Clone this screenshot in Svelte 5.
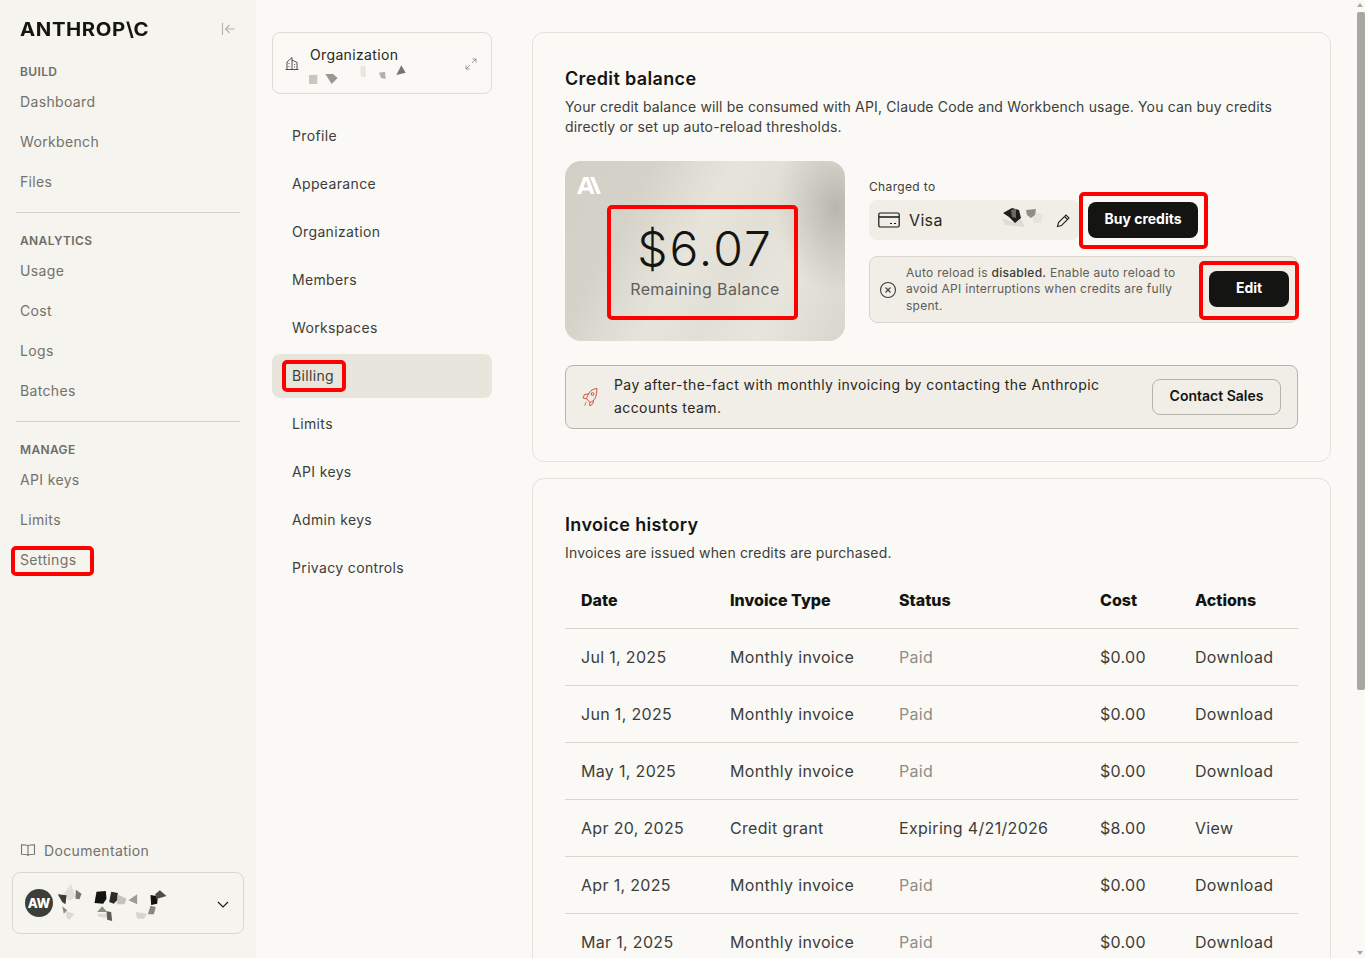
<script>
  const groups = [
    { label: 'BUILD', items: ['Dashboard', 'Workbench', 'Files'] },
    { label: 'ANALYTICS', items: ['Usage', 'Cost', 'Logs', 'Batches'] },
    { label: 'MANAGE', items: ['API keys', 'Limits', 'Settings'] }
  ];
  const settings = ['Profile', 'Appearance', 'Organization', 'Members', 'Workspaces', 'Billing', 'Limits', 'API keys', 'Admin keys', 'Privacy controls'];
  const invoices = [
    ['Jul 1, 2025', 'Monthly invoice', 'Paid', '$0.00', 'Download'],
    ['Jun 1, 2025', 'Monthly invoice', 'Paid', '$0.00', 'Download'],
    ['May 1, 2025', 'Monthly invoice', 'Paid', '$0.00', 'Download'],
    ['Apr 20, 2025', 'Credit grant', 'Expiring 4/21/2026', '$8.00', 'View'],
    ['Apr 1, 2025', 'Monthly invoice', 'Paid', '$0.00', 'Download'],
    ['Mar 1, 2025', 'Monthly invoice', 'Paid', '$0.00', 'Download']
  ];
</script>

<div class="app">
  <aside class="side">
    <div class="brand">
      <span class="logo">ANTHROP\C</span>
      <svg class="collapse" width="16" height="16" viewBox="0 0 16 16" fill="none" stroke="#b4b2aa" stroke-width="1.1"><path d="M2.500 2v12M14.500 8H5.500M9.500 4 5.500 8l4 4"/></svg>
    </div>
    {#each groups as g, i}
      {#if i > 0}<div class="rule"></div>{/if}
      <div class="grp">{g.label}</div>
      {#each g.items as it}
        <div class="nav"><span class:mark={it === 'Settings'} class:mark-s={it === 'Settings'}>{it}</span></div>
      {/each}
    {/each}
    <div class="push"></div>
    <div class="doc">
      <svg width="16" height="16" viewBox="0 0 16 16" fill="none" stroke="#77756e" stroke-width="1.1"><path d="M8 4C7 3 5 2.800 1.500 2.800v9.400C5 12.200 7 12.400 8 13.400c1-1 3-1.200 6.500-1.200V2.800C11 2.800 9 3 8 4Zm0 0v9.400"/></svg>
      <span>Documentation</span>
    </div>
    <div class="user">
      <div class="avatar">AW</div>
      <svg class="blur-user" width="112" height="40" viewBox="170 155 335 120">
        <polygon points="190,190 212,160 225,200 205,212" fill="#e2e0da"/>
        <polygon points="226,178 243,190 237,207 225,205" fill="#77756f"/>
        <polygon points="172,192 198,195 195,222 185,215" fill="#3c3b38"/>
        <polygon points="185,228 200,240 190,250" fill="#8d8b85"/>
        <polygon points="196,242 222,250 208,268 198,262" fill="#dddbd4"/>
        <polygon points="288,184 316,182 318,205 308,220 282,218" fill="#141413"/>
        <polygon points="332,184 352,188 354,205 340,220 326,215" fill="#2c2b29"/>
        <polygon points="350,192 378,205 372,222 350,222" fill="#c4c2bb"/>
        <polygon points="410,192 410,222 384,210" fill="#9c9a93"/>
        <polygon points="305,228 320,245 290,245" fill="#8f8d87"/>
        <polygon points="290,250 318,250 318,262 295,260" fill="#dad8d1"/>
        <polygon points="318,243 332,245 335,272 320,268" fill="#5e5d59"/>
        <polygon points="450,194 472,198 470,220 452,224" fill="#111110"/>
        <polygon points="478,180 498,197 468,206 464,192" fill="#4d4c48"/>
        <polygon points="450,226 466,230 460,252 442,252" fill="#898780"/>
        <polygon points="405,245 440,250 430,265 410,265" fill="#d6d4cd"/>
      </svg>
      <svg class="chev" width="14" height="14" viewBox="0 0 14 14" fill="none" stroke="#141413" stroke-width="1.1"><path d="m2 5 5 5 5-5"/></svg>
    </div>
  </aside>

  <nav class="sub">
    <div class="org">
      <svg class="org-ic" width="14" height="14" viewBox="0 0 14 14" fill="none" stroke="#3d3d3a" stroke-width=".9"><path d="M.5 13.500h13M2 13.500V6l5-4.500v12M7 4l5 2.500v7M4 7v1M4 10v1M9.500 8v1M9.500 10.500v1"/></svg>
      <div class="org-txt">
        <div>Organization</div>
        <svg width="100" height="20" viewBox="128 110 300 60">
          <polygon points="128,143 153,142 153,170 128,170" fill="#c8c6bf"/>
          <polygon points="177,140 200,140 214,152 196,170" fill="#9a9891"/>
          <polygon points="282,115 298,115 298,150 284,148" fill="#e7e5de"/>
          <polygon points="338,136 356,133 358,155 344,152" fill="#b3b1aa"/>
          <polygon points="405,114 418,136 390,143" fill="#777570"/>
        </svg>
      </div>
      <svg class="org-exp" width="12" height="12" viewBox="0 0 12 12" fill="none" stroke="#8f8d86" stroke-width=".9"><path d="M7.500 1H11v3.500M11 1 7 5M4.500 11H1V7.500M1 11l4-4"/></svg>
    </div>
    <div class="sub-list">
      {#each settings as s}
        <div class="sub-item" class:on={s === 'Billing'}><span class:mark={s === 'Billing'} class:mark-b={s === 'Billing'}>{s}</span></div>
      {/each}
    </div>
  </nav>

  <main class="main">
    <section class="card">
      <h2>Credit balance</h2>
      <p class="lede">Your credit balance will be consumed with API, Claude Code and Workbench usage. You can buy credits directly or set up auto-reload thresholds.</p>
      <div class="bal-row">
        <div class="gift">
          <svg class="a-mark" width="24" height="17" viewBox="0 0 24 17" fill="#fff"><path fill-rule="evenodd" d="M6.500 0h5l6 17h-4l-1.200-3.500H5.500L4 17H0ZM9 3.500l-2.500 7h4.800ZM13 0h4l7 17h-4Z"/></svg>
          <div class="amount mark mark-a">
            <div class="num">$6.07</div>
            <div class="rem">Remaining Balance</div>
          </div>
        </div>
        <div class="bal-right">
          <div class="charged">Charged to</div>
          <div class="pay-row">
            <div class="visa">
              <svg width="22" height="16" viewBox="0 0 22 16" fill="none" stroke="#141413" stroke-width="1.200"><rect x=".8" y="1" width="20.400" height="14" rx="1.500"/><path d="M1 5h20" stroke-width="1.500"/><path d="M12 11.500h2M16 11.500h2"/></svg>
              <span class="visa-t">Visa</span>
              <svg class="visa-blur" width="42" height="23" viewBox="3 5 42 23">
                <polygon points="3,15 16,20 22,16 26,24 6,22" fill="#dedcd4"/>
                <polygon points="4,10 13,5 20,7 22,15 16,20 10,14" fill="#1f1f1d"/>
                <polygon points="12,7 17,6 17,15 13,14" fill="#6a6965"/>
                <polygon points="34,8 44,12 42,20 34,20" fill="#e6e4dc"/>
                <polygon points="27,7 37,6 36,12 32,15 28,12" fill="#8f8d87"/>
              </svg>
              <svg class="pencil" width="15" height="15" viewBox="0 0 15 15" fill="none" stroke="#29261b" stroke-width="1.100"><path d="M1.500 13.500 2.500 9.500 10 2l3 3-7.500 7.500Z"/><path d="m8.500 3.500 3 3"/></svg>
            </div>
            <div class="mark mark-buy"><button class="dark buy">Buy credits</button></div>
          </div>
          <div class="auto">
            <svg class="x-ic" width="18" height="18" viewBox="0 0 18 18" fill="none" stroke="#3d3d3a" stroke-width="1.100"><circle cx="9" cy="9" r="7.500"/><path d="m6.500 6.500 5 5m0-5-5 5"/></svg>
            <div class="auto-t">Auto reload is <b>disabled.</b> Enable auto reload to avoid API interruptions when credits are fully spent.</div>
            <div class="mark mark-edit"><button class="dark edit">Edit</button></div>
          </div>
        </div>
      </div>
      <div class="sales">
        <svg class="rocket" width="16" height="20" viewBox="4 2 16 20" fill="none" stroke="#c9573a" stroke-width="1" stroke-linejoin="round"><path d="M19 3.500c-3.500.3-6.500 2-8 4.500-1 1.500-2 4-2.500 5.500l3.500 4c2-.8 4-2.200 5-4 1.300-2.500 1.800-6.500 2-10Z"/><path d="M10.500 9 6.500 9.500 5 13l3.500.8M15.500 15l-.5 3.500L12 21l-.5-3.500M8.500 17c-.8.5-1.500 2-1.500 3.500"/><circle cx="14.500" cy="9" r="1.400"/></svg>
        <div class="sales-t">Pay after-the-fact with monthly invoicing by contacting the Anthropic accounts team.</div>
        <button class="ghost">Contact Sales</button>
      </div>
    </section>

    <section class="card inv">
      <h2>Invoice history</h2>
      <p class="lede2">Invoices are issued when credits are purchased.</p>
      <table>
        <thead>
          <tr><th class="c1">Date</th><th class="c2">Invoice Type</th><th class="c3">Status</th><th class="c4">Cost</th><th>Actions</th></tr>
        </thead>
        <tbody>
          {#each invoices as r}
            <tr>
              <td>{r[0]}</td>
              <td>{r[1]}</td>
              <td class:paid={r[2] === 'Paid'}>{r[2]}</td>
              <td>{r[3]}</td>
              <td>{r[4]}</td>
            </tr>
          {/each}
        </tbody>
      </table>
    </section>
  </main>

  <div class="sb">
    <i class="up"></i>
    <i class="thumb"></i>
    <i class="down"></i>
  </div>
</div>

<style>
  :global(body) { margin: 0; background: #faf9f5; overflow: hidden; }
  .app {
    position: relative;
    display: flex;
    height: 958px;
    overflow: hidden;
    font-family: Inter, "Liberation Sans", sans-serif;
    font-size: 14px;
    color: #141413;
    letter-spacing: .025em;
  }
  .side {
    box-sizing: border-box;
    width: 256px;
    flex: none;
    height: 958px;
    background: #f5f4ee;
    padding: 0 12px;
    display: flex;
    flex-direction: column;
  }
  .brand {
    height: 58px;
    display: flex;
    align-items: center;
    justify-content: space-between;
    padding: 0 8px;
    flex: none;
  }
  .logo { font-weight: 700; font-size: 19px; letter-spacing: .03em; line-height: 1; color: #141413; transform: scaleX(1.07); transform-origin: left center; }
  .grp { font-size: 12px; font-weight: 600; color: #6f6d66; padding: 0 8px; height: 28px; line-height: 28px; letter-spacing: .03em; }
  .nav { height: 40px; line-height: 32px; padding: 0 8px; color: #73716a; }
  .rule { height: 1px; background: #d4d2ca; margin: 6px 4px 14px; }
  .push { flex: 1; }
  .doc { display: flex; align-items: center; gap: 8px; color: #73716a; padding: 0 8px; height: 22px; margin-bottom: 11px; }
  .user {
    box-sizing: border-box;
    height: 62px;
    border: 1px solid #d8d6ce;
    border-radius: 8px;
    display: flex;
    align-items: center;
    padding: 0 12px;
    margin-bottom: 24px;
    flex: none;
  }
  .avatar { width: 28px; height: 28px; border-radius: 50%; background: #3d3d3a; color: #fff; font-size: 13px; font-weight: 800; display: grid; place-items: center; flex: none; letter-spacing: 0; }
  .blur-user { margin: -3px 0 0 4px; filter: blur(.4px); }
  .chev { margin-left: auto; margin-right: 1px; margin-top: 1px; }

  .sub { box-sizing: border-box; width: 236px; flex: none; padding: 32px 0 0 16px; }
  .org {
    box-sizing: border-box;
    width: 220px;
    height: 62px;
    border: 1px solid #dedcd4;
    border-radius: 8px;
    display: flex;
    align-items: flex-start;
    padding: 12px 14px 0 12px;
    margin-bottom: 20px;
    background: #faf9f5;
  }
  .org-ic { margin: 11px 11px 0 0; }
  .org-txt { line-height: 20px; color: #29261b; }
  .org-txt svg { display: block; margin-top: -1px; margin-left: -1px; filter: blur(.3px); }
  .org-exp { margin: 13px 0 0 auto; }
  .sub-list { display: flex; flex-direction: column; gap: 4px; }
  .sub-item { height: 44px; line-height: 44px; padding: 0 20px; border-radius: 8px; color: #3d3d3a; }
  .sub-item.on { background: #e8e6dc; }

  .main { flex: none; width: 799px; margin-left: 40px; padding-top: 32px; display: flex; flex-direction: column; gap: 16px; }
  .card {
    box-sizing: border-box;
    border: 1px solid #e3e1d9;
    border-radius: 12px;
    padding: 32px;
    background: #faf9f5;
  }
  h2 { margin: 0; font-size: 18px; line-height: 28px; font-weight: 600; color: #141413; letter-spacing: .02em; }
  .lede { margin: 4px 0 0; line-height: 20px; color: #3d3d3a; letter-spacing: .0115em; }
  .lede2 { margin: 4px 0 0; line-height: 20px; color: #3d3d3a; letter-spacing: .0115em; }
  .bal-row { display: flex; gap: 24px; margin-top: 24px; }
  .gift {
    position: relative;
    box-sizing: border-box;
    width: 280px;
    height: 180px;
    flex: none;
    border-radius: 16px;
    background:
      radial-gradient(ellipse 62px 85px at 97% 26%, #b9b6ad 0%, rgba(185,182,173,0) 100%),
      linear-gradient(118deg, #d2cfc7 0%, #d5d2ca 24%, #e7e5db 46%, #e2e0d6 60%, #e8e6dc 76%, #d8d5cc 100%);
    display: flex;
    justify-content: center;
    padding-top: 44px;
  }
  .a-mark { position: absolute; left: 12px; top: 16px; }
  .amount { box-sizing: border-box; width: 191px; height: 115px; margin-left: -5px; padding-left: 5px; display: flex; flex-direction: column; align-items: center; }
  .num { font-size: 48px; line-height: 56px; margin-top: 16px; color: #141413; font-weight: 300; letter-spacing: .042em; }
  .rem { font-size: 16px; line-height: 24px; color: #5e5d59; }
  .bal-right { flex: 1; min-width: 0; }
  .charged { font-size: 12px; line-height: 20px; color: #3d3d3a; margin: 16px 0 3px; }
  .pay-row { display: flex; align-items: center; height: 40px; }
  .visa {
    box-sizing: border-box;
    width: 210px;
    height: 40px;
    background: #f0eee6;
    border-radius: 8px;
    display: flex;
    align-items: center;
    padding: 0 8px 0 9px;
    flex: none;
  }
  .visa-t { font-size: 16px; margin-left: 9px; color: #29261b; }
  .visa-blur { margin-left: auto; margin-right: 12px; margin-top: -1px; filter: blur(.7px); }
  .pencil { flex: none; }
  .dark {
    font: inherit;
    font-weight: 700;
    letter-spacing: 0;
    background: #141413;
    color: #fff;
    border: 0;
    border-radius: 8px;
    height: 36px;
    padding: 0 0 3px;
    display: block;
  }
  .buy { width: 110px; }
  .edit { width: 80px; }
  .mark-buy { margin-left: 9px; }
  .auto {
    box-sizing: border-box;
    height: 67px;
    margin-top: 16px;
    background: #f0eee6;
    border: 1px solid #d8d6ce;
    border-radius: 8px;
    display: flex;
    align-items: center;
    padding: 0 8px 0 9px;
  }
  .x-ic { flex: none; margin-right: 9px; margin-top: 1px; }
  .auto-t { font-size: 12px; line-height: 16.500px; color: #5e5d59; width: 280px; flex: none; letter-spacing: .023em; }
  .auto-t b { font-weight: 500; color: #3d3d3a; }
  .mark-edit { margin-left: auto; margin-top: -2px; }
  .sales {
    box-sizing: border-box;
    height: 64px;
    margin-top: 24px;
    background: #f0eee6;
    border: 1px solid #b5b3ab;
    border-radius: 8px;
    display: flex;
    align-items: center;
    padding: 0 16px;
  }
  .rocket { flex: none; margin-right: 16px; }
  .sales-t { width: 500px; line-height: 23px; color: #29261b; margin-top: -3px; letter-spacing: .03em; }
  .ghost {
    font: inherit;
    font-weight: 600;
    letter-spacing: 0;
    color: #141413;
    background: transparent;
    border: 1px solid #b5b3ab;
    border-radius: 8px;
    height: 36px;
    width: 129px;
    margin-left: auto;
    padding: 0 0 3px;
  }
  .inv { padding-bottom: 0; flex: none; }
  table { width: 733px; border-collapse: collapse; margin-top: 8px; table-layout: fixed; font-size: 16px; }
  th { font-weight: 800; text-align: left; height: 57px; padding: 2px 0 0 16px; letter-spacing: 0; border-bottom: 1px solid #d8d6ce; color: #141413; box-sizing: border-box; }
  th.c1 { width: 149px; }
  th.c2 { width: 169px; }
  th.c3 { width: 201px; }
  th.c4 { width: 95px; }
  td { height: 57px; padding: 0 0 0 16px; border-bottom: 1px solid #d8d6ce; color: #3d3d3a; box-sizing: border-box; white-space: nowrap; letter-spacing: .02em; }
  td.paid { color: #8f8d86; }

  .mark { position: relative; display: inline-block; }
  .mark::after {
    content: "";
    position: absolute;
    border: 4px solid #ff0000;
    border-radius: 5px;
    box-sizing: border-box;
    pointer-events: none;
  }
  .mark-s::after { inset: 2px -18px 0 -9px; }
  .mark-b::after { inset: 6px -12px 6px -10px; }
  .mark-a { display: flex; }
  .mark-a::after { inset: 0; }
  .mark-buy::after { inset: -10px -10px -11px -9px; }
  .mark-edit::after { inset: -10px -10px -13px -10px; }

  .sb { position: absolute; top: 0; right: 0; width: 9px; height: 958px; }
  .sb i { position: absolute; display: block; }
  .thumb { left: 1px; right: 0; top: 12px; height: 678px; background: #a8a7a3; border-radius: 2px; }
  .up, .down { left: 1px; width: 0; height: 0; border-left: 3.500px solid transparent; border-right: 3.500px solid transparent; }
  .up { top: 3px; border-bottom: 4px solid #a8a7a3; }
  .down { bottom: 3px; border-top: 4px solid #a8a7a3; }
</style>
